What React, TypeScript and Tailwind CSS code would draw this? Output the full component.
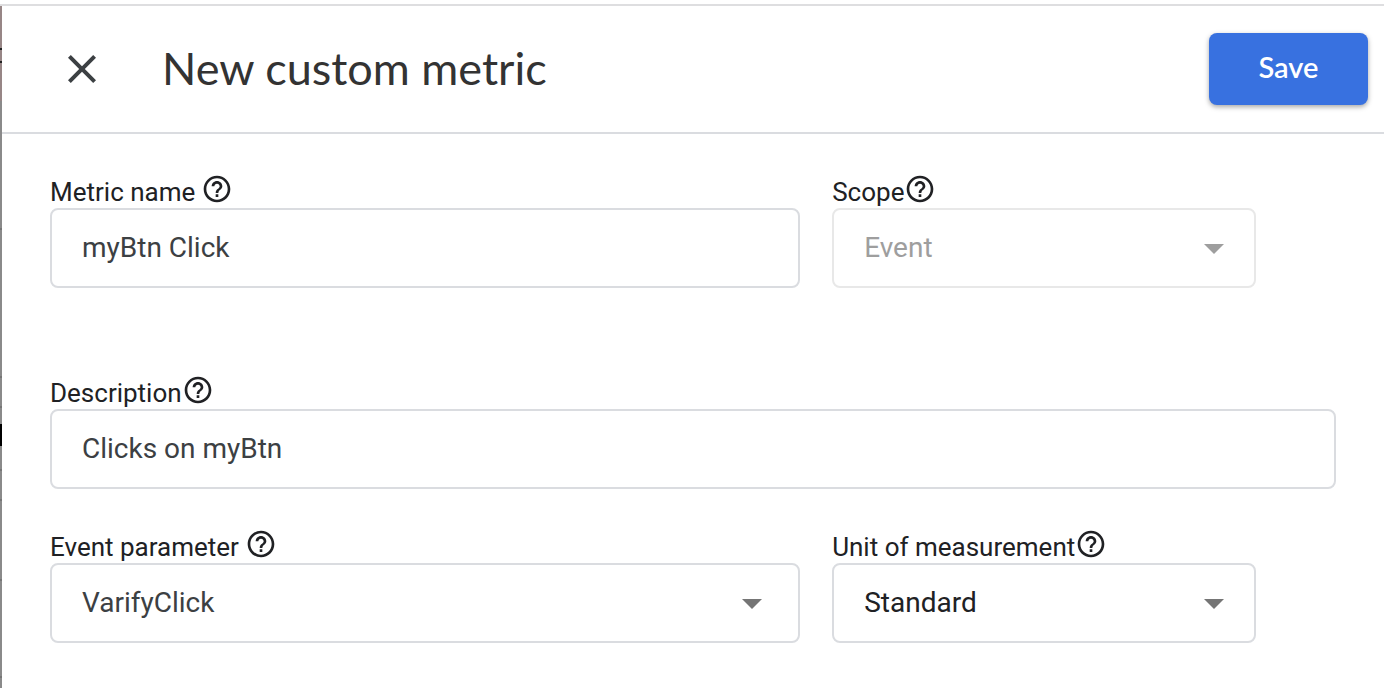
import { useState } from 'react';
import type { ReactNode } from 'react';
import { MdClose, MdHelpOutline } from 'react-icons/md';

interface FieldProps {
  id: string;
  label: string;
  spaced?: boolean;
  className?: string;
  children: ReactNode;
}

function Field({ id, label, spaced = false, className = '', children }: FieldProps) {
  return (
    <div className={className}>
      <div className="flex items-end">
        <label htmlFor={id} className="text-[26px] leading-8 whitespace-nowrap text-[#202124]">
          {label}
        </label>
        <button
          type="button"
          aria-label={`Help: ${label}`}
          className={spaced ? 'mb-[3px] ml-1.5 text-[#202124]' : 'mb-[3px] text-[#202124]'}
        >
          <MdHelpOutline className="size-8" />
        </button>
      </div>
      {children}
    </div>
  );
}

interface TextFieldProps {
  id: string;
  value: string;
  onChange: (value: string) => void;
}

function TextField({ id, value, onChange }: TextFieldProps) {
  return (
    <input
      id={id}
      type="text"
      value={value}
      onChange={e => onChange(e.target.value)}
      className="block h-20 w-full rounded-lg border-2 border-[#dadce0] bg-white px-[30px] pb-0.5 text-[28px] text-[#3c4043] outline-none"
    />
  );
}

interface SelectFieldProps {
  id: string;
  options: string[];
  className: string;
  arrowClassName: string;
  disabled?: boolean;
}

function SelectField({ id, options, className, arrowClassName, disabled }: SelectFieldProps) {
  return (
    <div className="relative">
      <select
        id={id}
        disabled={disabled}
        className={`block h-20 w-full appearance-none rounded-lg border-2 bg-white px-[30px] text-[28px] opacity-100 outline-none ${className}`}
      >
        {options.map(option => (
          <option key={option}>{option}</option>
        ))}
      </select>
      <svg
        viewBox="0 0 20 10"
        className={`pointer-events-none absolute top-9 h-2.5 w-5 fill-current ${arrowClassName}`}
      >
        <path d="M0 0h20L10 10z" />
      </svg>
    </div>
  );
}

// Sliver of the dimmed page that stays visible beside the sheet
function PageEdge() {
  return (
    <div aria-hidden="true" className="flex w-0.5 shrink-0 flex-col bg-[#8a8a8a]">
      <div className="h-[42px] bg-[#978686]" />
      <div className="h-0.5 bg-[#222222]" />
      <div className="h-[11px] bg-[#978686]" />
      <div className="h-0.5 bg-[#222222]" />
      <div className="h-[38px] bg-[#978686]" />
      <div className="h-[127px]" />
      <div className="h-0.5 bg-[#767676]" />
      <div className="h-[146px]" />
      <div className="h-0.5 bg-[#767676]" />
      <div className="h-7" />
      <div className="h-0.5 bg-[#767676]" />
      <div className="h-4" />
      <div className="h-[22px] bg-black" />
      <div className="h-[23px]" />
      <div className="h-0.5 bg-[#767676]" />
      <div className="h-7" />
      <div className="h-0.5 bg-[#767676]" />
      <div className="h-[78px]" />
      <div className="h-0.5 bg-[#767676]" />
      <div className="h-[95px]" />
      <div className="h-0.5 bg-[#767676]" />
    </div>
  );
}

export default function App() {
  const [name, setName] = useState('myBtn Click');
  const [description, setDescription] = useState('Clicks on myBtn');

  return (
    <div className="flex min-h-screen flex-col bg-white pt-1 font-['Roboto',sans-serif]">
      <div className="flex flex-1 border-t-2 border-[#dedee0]">
        <PageEdge />
        <main className="min-w-0 flex-1">
          <header className="flex h-32 items-center border-b-2 border-[#dadce0] pr-4 pl-14">
            <button type="button" aria-label="Close" className="text-[#3c4043]">
              <MdClose className="size-12" />
            </button>
            <h1 className="ml-14 flex-1 pb-0.5 font-['Lato',sans-serif] text-[45px] leading-14 text-[#333333]">
              New custom metric
            </h1>
            <button
              type="submit"
              form="metric-form"
              className="h-18 min-w-[159px] rounded-lg bg-[#3871e0] px-12 pb-1 font-['Lato',sans-serif] text-[29px] font-semibold text-white shadow-[0_2px_5px_rgba(0,0,0,0.35)]"
            >
              Save
            </button>
          </header>

          <form id="metric-form" className="px-12 pt-[39px]" onSubmit={e => e.preventDefault()}>
            <div className="flex gap-8">
              <Field id="name" label="Metric name" spaced className="w-7/12">
                <TextField id="name" value={name} onChange={setName} />
              </Field>
              <Field id="scope" label="Scope" className="w-1/3 max-w-[424px]">
                <SelectField
                  id="scope"
                  options={['Event']}
                  disabled
                  className="border-[#e8e8e8] text-[#9e9e9e]"
                  arrowClassName="right-8 text-[#9e9e9e]"
                />
              </Field>
            </div>

            <Field id="description" label="Description" className="mt-[86px]">
              <TextField id="description" value={description} onChange={setDescription} />
            </Field>

            <div className="mt-[39px] flex gap-8">
              <Field id="parameter" label="Event parameter" spaced className="w-7/12">
                <SelectField
                  id="parameter"
                  options={['VarifyClick']}
                  className="border-[#dadce0] text-[#3c4043]"
                  arrowClassName="right-[38px] text-[#757575]"
                />
              </Field>
              <Field id="unit" label="Unit of measurement" className="w-1/3 max-w-[424px]">
                <SelectField
                  id="unit"
                  options={['Standard', 'Currency', 'Distance', 'Time']}
                  className="border-[#dadce0] text-[#202124]"
                  arrowClassName="right-8 text-[#757575]"
                />
              </Field>
            </div>
          </form>
        </main>
      </div>
    </div>
  );
}
